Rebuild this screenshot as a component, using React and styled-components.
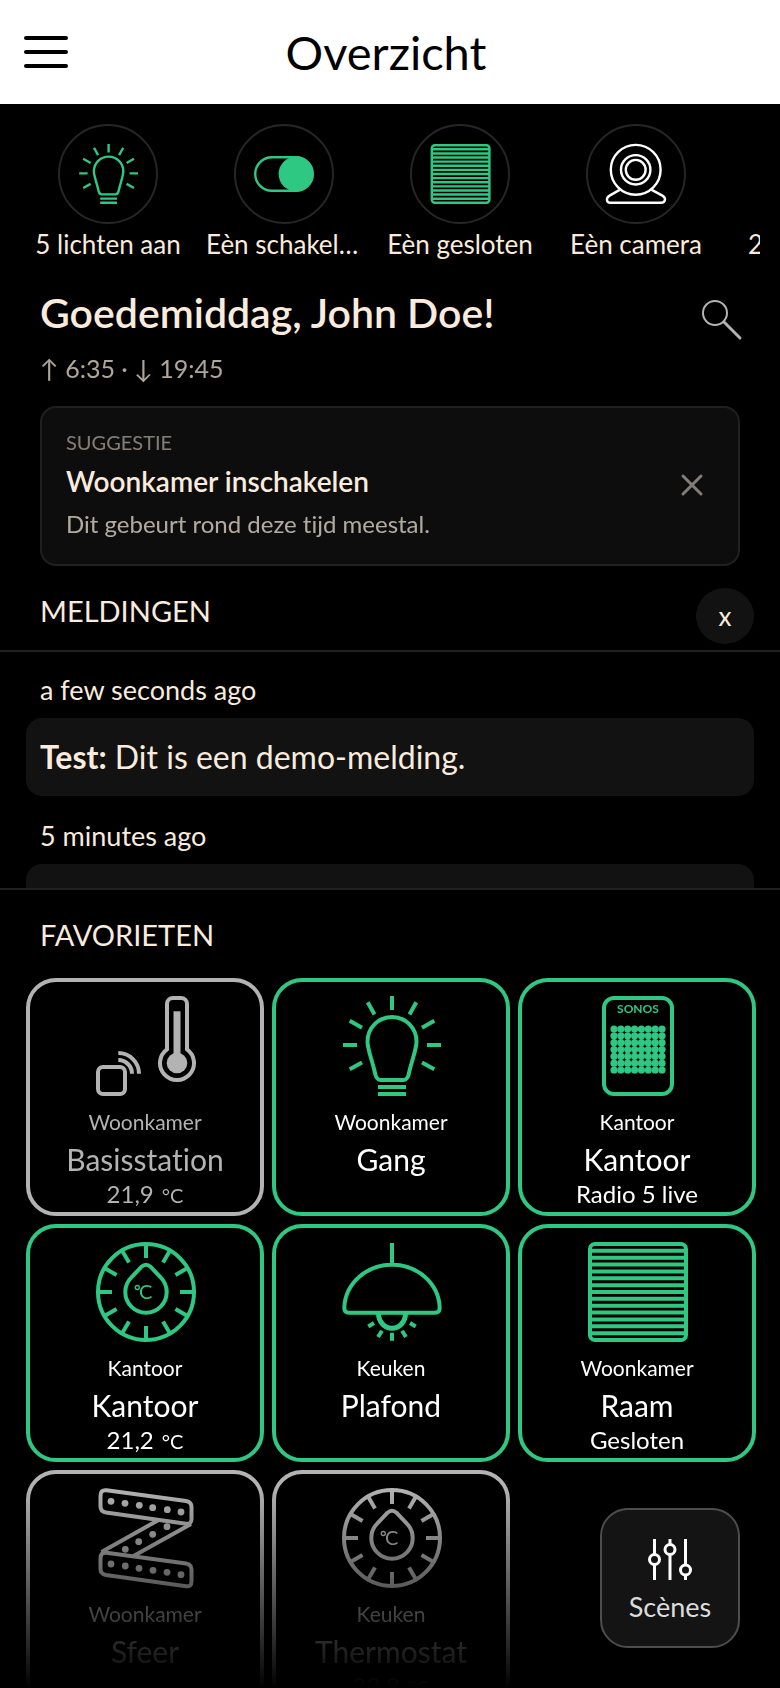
// External
import styled, { createGlobalStyle } from "styled-components";

const colors = {
  cream: "#faebdc",
  green: "#2fc883",
  gray: "#b3b3b3",
  line: "#202020",
  panel: "#121212",
};

const GlobalStyle = createGlobalStyle`
  *, *::before, *::after {
    box-sizing: border-box;
  }

  body {
    margin: 0;
    background-color: #000;
    color: ${colors.cream};
    font-family: Lato, "Open Sans", sans-serif;
    font-variant-ligatures: none;
  }

  h1, h2, h3, p, ul {
    margin: 0;
    padding: 0;
    font-weight: 400;
  }

  button {
    margin: 0;
    padding: 0;
    border: none;
    background: none;
    color: inherit;
    font-family: inherit;
    font-variant-ligatures: inherit;
    cursor: pointer;
  }
`;

// Layout
const Page = styled.div`
  height: 100vh;
  display: flex;
  flex-direction: column;
  overflow: hidden;
`;

const Header = styled.header`
  display: grid;
  grid-template-columns: 44px 1fr 44px;
  align-items: center;
  flex-shrink: 0;
  height: 104px;
  padding: 0 32px 0 24px;
  background-color: #fff;
  color: #000;
`;

const MenuButton = styled.button`
  display: flex;
  flex-direction: column;
  gap: 10px;
`;

const MenuBar = styled.span`
  width: 44px;
  height: 4px;
  border-radius: 2px;
  background-color: #000;
`;

const Title = styled.h1`
  font-size: 47px;
  line-height: 56px;
  text-align: center;
`;

const StatusBar = styled.nav`
  display: flex;
  flex-shrink: 0;
  margin: 20px 20px 0;
  overflow-x: auto;
  scrollbar-width: none;
`;

const StatusItem = styled.button`
  display: flex;
  flex-direction: column;
  align-items: center;
  flex: 0 0 176px;
  min-width: 0;
  gap: 4px;
  padding: 0 10px;
`;

const StatusCircle = styled.span`
  display: grid;
  place-items: center;
  width: 100px;
  height: 100px;
  border: 2px solid #262626;
  border-radius: 50%;
  color: ${props => (props.$active ? colors.green : "#fff")};
`;

const StatusLabel = styled.span`
  max-width: 100%;
  font-size: 26px;
  line-height: 32px;
  white-space: nowrap;
  overflow: hidden;
  text-overflow: ellipsis;
`;

const Welcome = styled.section`
  display: flex;
  justify-content: space-between;
  align-items: flex-start;
  flex-shrink: 0;
  margin: 28px 38px 0 40px;
`;

const Greeting = styled.h2`
  font-size: 41px;
  font-weight: 600;
  line-height: 50px;
`;

const SunTimes = styled.p`
  margin-top: 14px;
  font-size: 25px;
  line-height: 32px;
  opacity: 0.7;
`;

const SearchButton = styled.button`
  width: 40px;
  height: 40px;
  margin-top: 12px;
  color: ${colors.gray};
`;

const Suggestion = styled.section`
  display: flex;
  justify-content: space-between;
  align-items: center;
  flex-shrink: 0;
  margin: 22px 40px 0;
  padding: 22px 24px 24px;
  border: 2px solid ${colors.line};
  border-radius: 16px;
  background-color: #0d0d0d;
`;

const SuggestionBody = styled.div`
  display: flex;
  flex-direction: column;
  gap: 9px;
`;

const SuggestionKind = styled.p`
  font-size: 20px;
  line-height: 24px;
  text-transform: uppercase;
  opacity: 0.5;
`;

const SuggestionTitle = styled.h3`
  font-size: 28px;
  font-weight: 600;
  line-height: 36px;
`;

const SuggestionText = styled.p`
  font-size: 24px;
  line-height: 32px;
  opacity: 0.7;
`;

const DismissButton = styled.button`
  display: grid;
  place-items: center;
  width: 44px;
  height: 44px;
  opacity: 0.5;
`;

const SectionTitle = styled.h2`
  font-size: 29px;
  line-height: 46px;
  text-transform: uppercase;
`;

const MessagesHeader = styled.div`
  display: flex;
  justify-content: space-between;
  align-items: flex-start;
  flex-shrink: 0;
  margin-top: 22px;
  padding: 0 26px 6px 40px;
  border-bottom: 2px solid ${colors.line};
`;

const ClearButton = styled.button`
  width: 58px;
  height: 56px;
  border-radius: 50%;
  background-color: ${colors.panel};
  font-size: 26px;
  line-height: 32px;
`;

const Messages = styled.ul`
  flex-shrink: 0;
  height: 238px;
  padding: 20px 26px 0;
  border-bottom: 2px solid ${colors.line};
  list-style: none;
  overflow-y: auto;
  scrollbar-width: none;
`;

const Message = styled.li`
  display: flex;
  flex-direction: column;
  gap: 10px;
  margin-bottom: 22px;
`;

const MessageTime = styled.time`
  padding-left: 14px;
  font-size: 27px;
  line-height: 36px;
`;

const MessageText = styled.p`
  padding: 19px 14px;
  border-radius: 16px;
  background-color: ${colors.panel};
  font-size: 32px;
  line-height: 40px;
`;

const Favorites = styled.section`
  display: flex;
  flex-direction: column;
  flex: 1;
  min-height: 0;
  gap: 20px;
  padding-top: 22px;

  ${SectionTitle} {
    padding-left: 40px;
  }
`;

const Tiles = styled.div`
  display: grid;
  grid-template-columns: repeat(3, 1fr);
  align-content: start;
  flex: 1;
  min-height: 0;
  gap: 8px;
  padding: 0 24px 0 26px;
  overflow-y: auto;
  scrollbar-width: none;
  mask-image: linear-gradient(to top, transparent, #000 200px);
`;

const TileButton = styled.button`
  display: flex;
  flex-direction: column;
  align-items: center;
  aspect-ratio: 1;
  padding-top: 14px;
  border: 4px solid ${props => (props.$active ? colors.green : colors.gray)};
  border-radius: 30px;
  color: ${props => (props.$active ? "#fff" : colors.gray)};
`;

const TileIcon = styled.span`
  height: 100px;
  margin-bottom: 12px;
  color: ${props => (props.$active ? colors.green : colors.gray)};
`;

const TileRoom = styled.span`
  font-size: 21px;
  line-height: 28px;
`;

const TileName = styled.span`
  font-size: 30px;
  line-height: 46px;
`;

const TileState = styled.span`
  font-size: 24px;
  line-height: 24px;
`;

const Unit = styled.span`
  margin-left: 8px;
  font-size: 20px;
`;

const ScenesButton = styled.button`
  position: fixed;
  right: 40px;
  bottom: 40px;
  display: flex;
  flex-direction: column;
  align-items: center;
  justify-content: center;
  gap: 10px;
  width: 140px;
  height: 140px;
  padding-top: 6px;
  border: 2px solid #4d4d4d;
  border-radius: 28px;
  background-color: #141414;
  color: #dcdcdc;
  font-size: 27px;
  line-height: 32px;
`;

const Svg = styled.svg`
  display: block;
  fill: none;
  stroke: currentColor;
  stroke-width: 4;
  overflow: visible;
`;

const IconText = styled.text`
  fill: currentColor;
  stroke: none;
  font-size: ${props => props.$size}px;
  font-weight: ${props => props.$weight || 400};
`;

// Icons
const Icon = ({ size = 100, children }) => (
  <Svg width={size} height={size} viewBox="0 0 100 100" aria-hidden="true">
    {children}
  </Svg>
);

const range = n => Array.from({ length: n }, (_, i) => i);

const BulbIcon = ({ size }) => (
  <Icon size={size}>
    <path d="M51 0V14M2 49H16M86 49H100M26.7 6.3L33.5 18.5M75.3 6.3L68.5 18.5M8.7 24.7L21 31.7M93.3 24.7L81 31.7M8.7 73.3L21 66.5M93.3 73.3L81 66.5" />
    <path d="M26.5 45.5A24.5 24.5 0 0 1 75.5 45.5C75.5 54 71 63 67.5 79Q66 84 62.5 84H39.5Q36 84 34.5 79C31 63 26.5 54 26.5 45.5Z" />
    <path d="M37 91H65M37 98H65" />
  </Icon>
);

const ToggleIcon = ({ size }) => (
  <Icon size={size}>
    <rect x="2" y="22" width="96" height="56" rx="28" />
    <circle cx="70" cy="50" r="29" fill="currentColor" stroke="none" />
  </Icon>
);

const ShutterIcon = ({ size }) => (
  <Icon size={size}>
    <rect x="3" y="2" width="96" height="96" rx="5" />
    {range(13).map(i => (
      <path key={i} d={`M3 ${2 + ((i + 1) * 96) / 14}H99`} />
    ))}
  </Icon>
);

const CameraIcon = ({ size }) => (
  <Icon size={size}>
    <circle cx="49.5" cy="43" r="41.5" />
    <circle cx="49.5" cy="43" r="24.5" />
    <circle cx="49.5" cy="43" r="16.5" />
    <path d="M23.5 76L6 86C-1 90 1 98 7 98H92C99 98 101 90 94 86L75.5 76" />
  </Icon>
);

const SensorIcon = ({ size }) => (
  <Icon size={size}>
    <rect x="3" y="71" width="27" height="27" rx="5" />
    <path d="M23.3 57A20.7 20.7 0 0 1 44 77.7M23.3 64A13.7 13.7 0 0 1 37 77.7" />
    <path d="M72 53.3V8A6 6 0 0 1 78 2H86A6 6 0 0 1 92 8V53.3A17 17 0 1 1 72 53.3Z" />
    <path d="M82 15.3V67" strokeWidth="7" />
    <circle cx="82" cy="67" r="10.3" fill="currentColor" stroke="none" />
  </Icon>
);

const SonosIcon = () => (
  <Icon>
    <rect x="17" y="2" width="68" height="96" rx="10" />
    <IconText x="51" y="17" textAnchor="middle" $size={12} $weight={700}>
      SONOS
    </IconText>
    {range(56).map(i => (
      <circle
        key={i}
        cx={27 + (i % 8) * 6.86}
        cy={33 + Math.floor(i / 8) * 6.83}
        r="3.6"
        fill="currentColor"
        stroke="none"
      />
    ))}
  </Icon>
);

const ThermostatIcon = () => (
  <Icon>
    <circle cx="51" cy="50" r="48" />
    {range(12).map(i => (
      <path key={i} d="M51 2V16" transform={`rotate(${i * 30} 51 50)`} />
    ))}
    <path d="M36.4 35.4L46.5 24.7Q51 20.8 55.5 24.7L65.6 35.4A20.7 20.7 0 1 1 36.4 35.4Z" />
    <circle cx="42.3" cy="45.5" r="2" strokeWidth="1.3" />
    <IconText x="44" y="57" $size={20}>
      C
    </IconText>
  </Icon>
);

const LampIcon = () => (
  <Icon>
    <path d="M51 1V22" />
    <path d="M3.3 66C4 41 26 22.7 51 22.7S98 41 98.7 66Q98.7 70.7 94 70.7H8Q3.3 70.7 3.3 66Z" />
    <path d="M37.5 71.5A13.5 14.8 0 0 0 64.5 71.5" strokeWidth="5" />
    <path d="M51 90.7V98.7M41 88.7L37 95M61 88.7L65 95M33 81L27.3 84.5M69 81L74.7 84.5" />
  </Icon>
);

const stripDots = [
  [16, 13.3], [30, 15.3], [44.3, 17.3], [57.7, 19.7], [72.3, 21.7], [86, 24],
  [72, 38.7], [57.7, 46.3], [43.7, 53.7], [30.3, 61.3],
  [16, 76], [30.3, 78], [44, 80.3], [58, 82.3], [72, 84.3], [86, 86.7],
];

const stripBand =
  "M11.5 2.2L91 13Q96.5 14 96.5 19V31Q96.5 36.5 91 35.7L11 24.5Q5.5 23.5 5.5 18.5V8Q5.5 1.5 11.5 2.2Z";

const LedStripIcon = () => (
  <Icon>
    <path d={stripBand} />
    <path d={stripBand} transform="translate(0 62.5)" />
    <path d="M63.5 32L6.5 64M96 36L38.5 68" />
    {stripDots.map(([x, y]) => (
      <circle key={`${x}-${y}`} cx={x} cy={y} r="3.4" fill="currentColor" stroke="none" />
    ))}
  </Icon>
);

const SearchIcon = () => (
  <Svg width="40" height="40" viewBox="0 0 40 40" aria-hidden="true">
    <g strokeWidth="2" strokeLinecap="round">
      <circle cx="13" cy="13" r="12" />
      <path d="M22 22L38 38" strokeWidth="3" />
    </g>
  </Svg>
);

const CloseIcon = () => (
  <Svg width="20" height="20" viewBox="0 0 20 20" aria-hidden="true">
    <path d="M1 1L19 19M19 1L1 19" strokeWidth="3" strokeLinecap="round" />
  </Svg>
);

const ScenesIcon = () => (
  <Svg width="44" height="42" viewBox="0 0 44 42" aria-hidden="true">
    <g stroke="#fff" strokeWidth="3" fill="#141414">
      <path d="M6.5 0V41M22 0V41M37.5 0V41" />
      <circle cx="6.5" cy="20.5" r="5" />
      <circle cx="22" cy="10.5" r="5" />
      <circle cx="37.5" cy="31" r="5" />
    </g>
  </Svg>
);

// Data
const statuses = [
  { label: "5 lichten aan", icon: BulbIcon, active: true },
  { label: "Eèn schakelaar aan", icon: ToggleIcon, active: true },
  { label: "Eèn gesloten", icon: ShutterIcon, active: true },
  { label: "Eèn camera", icon: CameraIcon },
  { label: "2 personen", icon: SensorIcon },
];

const messages = [
  { time: "a few seconds ago", title: "Test:", text: "Dit is een demo-melding." },
  { time: "5 minutes ago", title: "Test:", text: "Dit is een demo-melding." },
];

const tiles = [
  { room: "Woonkamer", name: "Basisstation", state: "21,9", unit: "°C", icon: SensorIcon },
  { room: "Woonkamer", name: "Gang", icon: BulbIcon, active: true },
  { room: "Kantoor", name: "Kantoor", state: "Radio 5 live", icon: SonosIcon, active: true },
  { room: "Kantoor", name: "Kantoor", state: "21,2", unit: "°C", icon: ThermostatIcon, active: true },
  { room: "Keuken", name: "Plafond", icon: LampIcon, active: true },
  { room: "Woonkamer", name: "Raam", state: "Gesloten", icon: ShutterIcon, active: true },
  { room: "Woonkamer", name: "Sfeer", icon: LedStripIcon },
  { room: "Keuken", name: "Thermostat", state: "23,8", unit: "°C", icon: ThermostatIcon },
];

const Status = ({ label, icon: StatusIcon, active }) => (
  <StatusItem type="button">
    <StatusCircle $active={active}>
      <StatusIcon size={60} />
    </StatusCircle>
    <StatusLabel>{label}</StatusLabel>
  </StatusItem>
);

const Tile = ({ room, name, state, unit, icon: DeviceIcon, active }) => (
  <TileButton type="button" $active={active}>
    <TileIcon $active={active}>
      <DeviceIcon />
    </TileIcon>
    <TileRoom>{room}</TileRoom>
    <TileName>{name}</TileName>
    {state && (
      <TileState>
        {state}
        {unit && <Unit>{unit}</Unit>}
      </TileState>
    )}
  </TileButton>
);

const App = () => {
  return (
    <Page>
      <GlobalStyle />
      <Header>
        <MenuButton type="button" aria-label="Menu">
          <MenuBar />
          <MenuBar />
          <MenuBar />
        </MenuButton>
        <Title>Overzicht</Title>
      </Header>
      <StatusBar>
        {statuses.map(status => (
          <Status key={status.label} {...status} />
        ))}
      </StatusBar>
      <Welcome>
        <div>
          <Greeting>Goedemiddag, John Doe!</Greeting>
          <SunTimes>↑ 6:35 · ↓ 19:45</SunTimes>
        </div>
        <SearchButton type="button" aria-label="Zoeken">
          <SearchIcon />
        </SearchButton>
      </Welcome>
      <Suggestion>
        <SuggestionBody>
          <SuggestionKind>Suggestie</SuggestionKind>
          <SuggestionTitle>Woonkamer inschakelen</SuggestionTitle>
          <SuggestionText>Dit gebeurt rond deze tijd meestal.</SuggestionText>
        </SuggestionBody>
        <DismissButton type="button" aria-label="Sluiten">
          <CloseIcon />
        </DismissButton>
      </Suggestion>
      <MessagesHeader>
        <SectionTitle>Meldingen</SectionTitle>
        <ClearButton type="button">x</ClearButton>
      </MessagesHeader>
      <Messages>
        {messages.map(message => (
          <Message key={message.time}>
            <MessageTime>{message.time}</MessageTime>
            <MessageText>
              <strong>{message.title}</strong> {message.text}
            </MessageText>
          </Message>
        ))}
      </Messages>
      <Favorites>
        <SectionTitle>Favorieten</SectionTitle>
        <Tiles>
          {tiles.map(tile => (
            <Tile key={tile.room + tile.name} {...tile} />
          ))}
        </Tiles>
      </Favorites>
      <ScenesButton type="button">
        <ScenesIcon />
        Scènes
      </ScenesButton>
    </Page>
  );
};

export default App;
